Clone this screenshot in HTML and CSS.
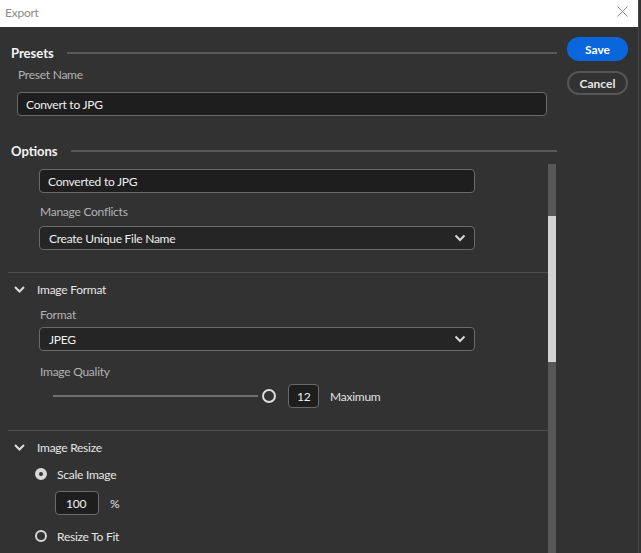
FILE: index.html
```html
<!DOCTYPE html>
<html>
<head>
<meta charset="utf-8">
<link rel="stylesheet" href="styles.css">
</head>
<body>
<div class="window">
  <div class="titlebar">
    <span class="title">Export</span>
    <svg class="close" width="11" height="11" viewBox="0 0 11 11"><path d="M0.5 0.5 L10.5 10.5 M10.5 0.5 L0.5 10.5" stroke="#8c8c8c" stroke-width="1"/></svg>
  </div>
  <div class="main">
    <div class="left">
      <div class="group-head presets-head"><span>Presets</span><div class="rule"></div></div>
      <div class="preset-body">
        <div class="label">Preset Name</div>
        <div class="textbox wide">Convert to JPG</div>
      </div>
      <div class="group-head options-head"><span>Options</span><div class="rule"></div></div>
      <div class="scroller">
        <div class="scroll-content">
          <div class="block">
            <div class="textbox field first">Converted to JPG</div>
            <div class="label mc">Manage Conflicts</div>
            <div class="textbox field dropdown mc-dd"><span>Create Unique File Name</span>
              <svg width="12" height="8" viewBox="0 0 12 8"><path d="M1.5 1.5 L6 6 L10.5 1.5" fill="none" stroke="#d8d8d8" stroke-width="2"/></svg>
            </div>
          </div>
          <div class="sep"></div>
          <div class="section-title">
            <svg width="11" height="7" viewBox="0 0 11 7"><path d="M1 1 L5.5 5.5 L10 1" fill="none" stroke="#dcdcdc" stroke-width="2"/></svg>
            <span>Image Format</span>
          </div>
          <div class="block">
            <div class="label fmt">Format</div>
            <div class="textbox field dropdown fmt-dd"><span>JPEG</span>
              <svg width="12" height="8" viewBox="0 0 12 8"><path d="M1.5 1.5 L6 6 L10.5 1.5" fill="none" stroke="#d8d8d8" stroke-width="2"/></svg>
            </div>
            <div class="label iq">Image Quality</div>
            <div class="slider-row">
              <div class="track"></div>
              <div class="handle"></div>
              <div class="textbox num">12</div>
              <span class="suffix">Maximum</span>
            </div>
          </div>
          <div class="sep sep2"></div>
          <div class="section-title">
            <svg width="11" height="7" viewBox="0 0 11 7"><path d="M1 1 L5.5 5.5 L10 1" fill="none" stroke="#dcdcdc" stroke-width="2"/></svg>
            <span>Image Resize</span>
          </div>
          <div class="radio-row first-radio"><span class="radio on"></span><span>Scale Image</span></div>
          <div class="pct-row"><div class="textbox pct">100</div><span class="pct-sign">%</span></div>
          <div class="radio-row second-radio"><span class="radio"></span><span>Resize To Fit</span></div>
        </div>
        <div class="scrollbar"><div class="thumb"></div></div>
      </div>
    </div>
    <div class="right">
      <div class="btn save">Save</div>
      <div class="btn cancel">Cancel</div>
    </div>
  </div>
</div>
</body>
</html>
```
FILE: styles.css
```css
html, body {
  margin: 0;
  padding: 0;
  background: #323232;
  overflow: hidden;
}
body {
  font-family: Lato, "Noto Sans", sans-serif;
  font-size: 12px;
  letter-spacing: -0.25px;
  color: #e3e3e3;
}
.window {
  width: 638px;
  height: 553px;
  border-right: 1px solid #474747;
  background: #323232;
  overflow: hidden;
}
.titlebar {
  height: 27px;
  background: #ffffff;
  display: flex;
  align-items: center;
  justify-content: space-between;
  padding: 0 10px 0 5px;
  box-sizing: border-box;
}
.title {
  color: #8a8a8a;
  font-size: 12px;
  margin-top: -3px;
}
.close {
  margin-top: -4px;
}
.main {
  display: flex;
}
.left {
  width: 557px;
}
.group-head {
  display: flex;
  align-items: center;
  padding-left: 11px;
  height: 18px;
  font-weight: 700;
  font-size: 13px;
  letter-spacing: 0;
  color: #f4f4f4;
}
.group-head .rule {
  flex: 1;
  height: 2px;
  background: #585858;
  margin-left: 13px;
}
.presets-head {
  margin-top: 17px;
}
.options-head {
  margin-top: 26px;
}
.preset-body {
  padding-left: 17px;
  padding-right: 10px;
}
.label {
  color: #b2b2b2;
  font-size: 12px;
  line-height: 16px;
}
.preset-body .label {
  margin-top: 5px;
  padding-left: 1px;
}
.textbox {
  box-sizing: border-box;
  height: 24px;
  border: 1px solid #6a6a6a;
  border-radius: 4px;
  background: #1e1e1e;
  display: flex;
  align-items: center;
  padding-left: 8px;
  color: #efefef;
}
.preset-body .textbox {
  margin-top: 9px;
}
.scroller {
  display: flex;
  margin-top: 4px;
  margin-left: 8px;
  height: 400px;
}
.scroll-content {
  flex: 1;
  padding-top: 5px;
}
.scrollbar {
  width: 8px;
  margin-right: 1px;
  background: #575757;
  position: relative;
}
.thumb {
  position: absolute;
  left: 0;
  right: 0;
  top: 52px;
  height: 146px;
  background: #d3d3d3;
}
.block {
  padding-left: 31px;
}
.field {
  width: 436px;
  padding-left: 8px;
}
.dropdown {
  background: #252525;
  justify-content: space-between;
  padding-right: 8px;
  padding-left: 9px;
}
.block .label {
  padding-left: 1px;
}
.mc { margin-top: 11px; }
.mc-dd { margin-top: 6px; }
.sep {
  height: 1px;
  background: #4e4e4e;
  margin-top: 22px;
}
.sep2 { margin-top: 22px; }
.section-title {
  display: flex;
  align-items: center;
  height: 20px;
  margin-top: 6px;
  padding-left: 6px;
  color: #e6e6e6;
}
.section-title svg {
  margin-right: 12px;
}
.fmt { margin-top: 8px; }
.fmt-dd { margin-top: 4px; }
.iq { margin-top: 13px; }
.slider-row {
  display: flex;
  align-items: center;
  height: 24px;
  margin-top: 4px;
  padding-left: 14px;
}
.track {
  width: 205px;
  height: 2px;
  background: #6f6f6f;
}
.handle {
  box-sizing: border-box;
  width: 14px;
  height: 14px;
  border-radius: 50%;
  border: 2px solid #dcdcdc;
  background: #323232;
  margin-left: 4px;
}
.num {
  width: 31px;
  margin-left: 12px;
  padding-left: 8px;
}
.suffix {
  margin-left: 11px;
  color: #e0e0e0;
}
.radio-row {
  display: flex;
  align-items: center;
  height: 20px;
  padding-left: 27px;
  color: #e6e6e6;
}
.first-radio { margin-top: 7px; }
.second-radio { margin-top: 11px; }
.radio {
  box-sizing: border-box;
  width: 12px;
  height: 12px;
  border-radius: 50%;
  border: 2px solid #d8d8d8;
  background: #323232;
  margin-right: 10px;
}
.radio.on {
  border-width: 4px;
}
.pct-row {
  display: flex;
  align-items: center;
  margin-top: 7px;
  padding-left: 47px;
}
.pct {
  width: 44px;
  padding-left: 10px;
}
.pct-sign {
  margin-left: 11px;
  color: #e0e0e0;
}
.right {
  padding-left: 10px;
  padding-top: 10px;
}
.btn {
  box-sizing: border-box;
  width: 61px;
  height: 24px;
  border-radius: 12px;
  display: flex;
  align-items: center;
  justify-content: center;
  font-size: 12px;
  font-weight: 700;
  letter-spacing: 0;
}
.save {
  background: #0a66dc;
  color: #ffffff;
}
.cancel {
  margin-top: 10px;
  border: 2px solid #555555;
  color: #e6e6e6;
}
```
